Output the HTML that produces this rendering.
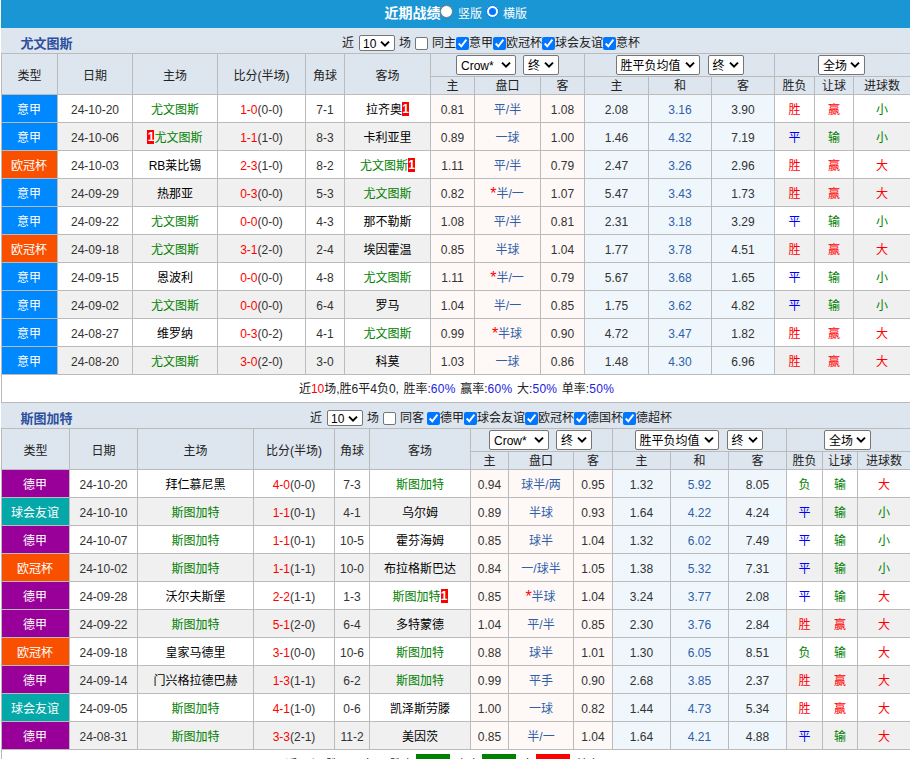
<!DOCTYPE html>
<html lang="zh-CN"><head><meta charset="utf-8"><title>近期战绩</title>
<style>
*{box-sizing:border-box}
html,body{margin:0;padding:0;background:#fff}
body{width:910px;height:759px;overflow:hidden;position:relative;font-family:"Liberation Sans","Noto Sans CJK SC",sans-serif;font-size:12px;color:#333}
#wrap{position:absolute;left:1px;top:0;width:910px}
.top{height:28px;background:#1b96d5;color:#fff;position:relative}
.top b{position:absolute;left:383.5px;top:3px;font-size:14px;line-height:20px}
.top .rd{position:absolute;top:5px;width:13px;height:13px;border-radius:50%;background:#fff;border:1px solid #767676}
.top .rd.on{border:1px solid #0075ff;background:#fff}
.top .rd.on:after{content:"";position:absolute;left:2px;top:2px;width:7px;height:7px;background:#0075ff;border-radius:50%}
.top .lb{position:absolute;top:6px;line-height:16px}
.tbar{background:#dde5ee;position:relative;height:25px}
.nm{position:absolute;left:19.5px;bottom:0.5px;font-weight:bold;color:#2c4f9e;font-size:13px;line-height:18px}
.ctl{position:absolute;left:0;top:6px;height:18px;white-space:nowrap;display:flex;align-items:center}
.ctl .t{line-height:18px;color:#222;display:inline-block;flex:none}
.cb{display:inline-block;width:13px;height:13px;border:1px solid #767676;border-radius:2px;background:#fff;margin:1px 0 0 0;flex:none}
.cb.on{border:none;background:#0075ff}
.cb svg{display:block}
.sel{display:inline-block;position:relative;height:20px;border:1px solid #767676;border-radius:2px;background:#fff;vertical-align:middle;color:#000;text-align:left}
.sel .st{position:absolute;left:4px;top:1px;line-height:18px;white-space:nowrap}
.sel .ar{position:absolute;right:4px;top:5px}
.sel.sm{height:16px}
.sel.sm .st{line-height:14px;left:3px}
.sel.sm .ar{top:4px}
.sel.m2{margin-left:7px}
.sel.m3{margin-left:8px}
.sel.m4{left:-1px}
table{border-collapse:collapse;table-layout:fixed;width:910px}
th,td{border:1px solid #bbb;text-align:center;padding:0;font-weight:normal;overflow:hidden;white-space:nowrap}
th{background:#dde5ee;color:#222}
tr.h1{height:23px}
tr.h2{height:18px}
tr.h2 th{line-height:16px}
td{height:28px;background:#fff}
tr.a td{background:#f0f0f0}
td.k{color:#000}
td.n{padding-top:2px}
td.lg{color:#fff !important;padding-right:1px}
.l-ita{background:#0088ff !important}
.l-ucl{background:#f95000 !important}
.l-ger{background:#990099 !important}
.l-fri{background:#04a8a8 !important}
td.o1{background:#fef9f6 !important}
td.o2{background:#eff7fc !important}
.bl{color:#2f5fa8}
.r{color:#f00}
.as{font-size:16px;line-height:0;vertical-align:-1px;margin-left:-1px}
.g{color:#008000}
.b{color:#00f}
.rc{background:#f00;color:#fff;font-weight:bold;display:inline-block;width:7px;height:14px;line-height:14px;vertical-align:middle;position:relative;top:-1px;text-align:center}
.sum{height:28px;line-height:27px;padding-top:1px;word-spacing:1.2px;text-align:center;border-left:1px solid #bbb;border-bottom:1px solid #bbb;color:#222;background:#fff}
.sum.s2{padding-top:2px}
.sum.s2 i{top:-2px}
.sum .p{color:#2222dd;letter-spacing:.3px}
.sum i{font-style:normal;color:#fff;display:inline-block;width:34px;height:20px;line-height:20px;vertical-align:middle;position:relative;top:-1px;left:-1px}
</style></head><body><div id="wrap">
<div class="top"><b>近期战绩</b><span class="rd" style="left:439px"></span><span class="lb" style="left:457px">竖版</span><span class="rd on" style="left:485px"></span><span class="lb" style="left:502px">横版</span></div>
<div class="tbar"><div class="nm">尤文图斯</div><div class="ctl" style="left:341px"><span class="t" style="width:17px">近</span><span class="sel sm" style="width:36px"><span class="st">10</span><svg class="ar" viewBox="0 0 10 8" width="10" height="8"><path d="M1 1.6 L5 5.6 L9 1.6" fill="none" stroke="#000" stroke-width="2"/></svg></span><span class="t" style="width:12px;margin:0 4px">场</span><span class="cb"></span><span class="t" style="margin-left:4px;margin-right:0px">同主</span><span class="cb on"><svg viewBox="0 0 13 13" width="13" height="13"><path d="M2.7 6.5 L5.3 9.3 L10.4 2.7" fill="none" stroke="#fff" stroke-width="1.9"/></svg></span><span class="t">意甲</span><span class="cb on"><svg viewBox="0 0 13 13" width="13" height="13"><path d="M2.7 6.5 L5.3 9.3 L10.4 2.7" fill="none" stroke="#fff" stroke-width="1.9"/></svg></span><span class="t">欧冠杯</span><span class="cb on"><svg viewBox="0 0 13 13" width="13" height="13"><path d="M2.7 6.5 L5.3 9.3 L10.4 2.7" fill="none" stroke="#fff" stroke-width="1.9"/></svg></span><span class="t">球会友谊</span><span class="cb on"><svg viewBox="0 0 13 13" width="13" height="13"><path d="M2.7 6.5 L5.3 9.3 L10.4 2.7" fill="none" stroke="#fff" stroke-width="1.9"/></svg></span><span class="t">意杯</span></div></div>
<table><colgroup><col style="width:56px"><col style="width:75px"><col style="width:85px"><col style="width:88px"><col style="width:39px"><col style="width:86px"><col style="width:44px"><col style="width:66px"><col style="width:44px"><col style="width:64px"><col style="width:63px"><col style="width:63px"><col style="width:40px"><col style="width:39px"><col style="width:57px"></colgroup><tr class="h1"><th rowspan="2">类型</th><th rowspan="2">日期</th><th rowspan="2">主场</th><th rowspan="2">比分(半场)</th><th rowspan="2">角球</th><th rowspan="2">客场</th><th colspan="3" class="sc" style="padding-right:0px"><span class="sel " style="width:60px"><span class="st">Crow*</span><svg class="ar" viewBox="0 0 10 8" width="10" height="8"><path d="M1 1.6 L5 5.6 L9 1.6" fill="none" stroke="#000" stroke-width="2"/></svg></span><span class="sel m2" style="width:36px"><span class="st">终</span><svg class="ar" viewBox="0 0 10 8" width="10" height="8"><path d="M1 1.6 L5 5.6 L9 1.6" fill="none" stroke="#000" stroke-width="2"/></svg></span></th><th colspan="3" class="sc" style="padding-right:0px"><span class="sel " style="width:84px"><span class="st">胜平负均值</span><svg class="ar" viewBox="0 0 10 8" width="10" height="8"><path d="M1 1.6 L5 5.6 L9 1.6" fill="none" stroke="#000" stroke-width="2"/></svg></span><span class="sel m3" style="width:36px"><span class="st">终</span><svg class="ar" viewBox="0 0 10 8" width="10" height="8"><path d="M1 1.6 L5 5.6 L9 1.6" fill="none" stroke="#000" stroke-width="2"/></svg></span></th><th colspan="3" class="sc"><span class="sel m4" style="width:47px"><span class="st">全场</span><svg class="ar" viewBox="0 0 10 8" width="10" height="8"><path d="M1 1.6 L5 5.6 L9 1.6" fill="none" stroke="#000" stroke-width="2"/></svg></span></th></tr><tr class="h2"><th>主</th><th>盘口</th><th>客</th><th>主</th><th>和</th><th>客</th><th>胜负</th><th>让球</th><th>进球数</th></tr><tr class=""><td class="lg l-ita">意甲</td><td class="n">24-10-20</td><td class="k"><span class="g">尤文图斯</span></td><td class="n"><span class="r">1-0</span>(0-0)</td><td class="n">7-1</td><td class="k">拉齐奥<span class="rc">1</span></td><td class="o1 n">0.81</td><td class="o1 bl">平/半</td><td class="o1 n">1.08</td><td class="o2 n">2.08</td><td class="o2 bl n">3.16</td><td class="o2 n">3.90</td><td class="r">胜</td><td class="r">赢</td><td class="g">小</td></tr>
<tr class="a"><td class="lg l-ita">意甲</td><td class="n">24-10-06</td><td class="k"><span class="rc">1</span><span class="g">尤文图斯</span></td><td class="n"><span class="r">1-1</span>(1-0)</td><td class="n">8-3</td><td class="k">卡利亚里</td><td class="o1 n">0.89</td><td class="o1 bl">一球</td><td class="o1 n">1.00</td><td class="o2 n">1.46</td><td class="o2 bl n">4.32</td><td class="o2 n">7.19</td><td class="b">平</td><td class="g">输</td><td class="g">小</td></tr>
<tr class=""><td class="lg l-ucl">欧冠杯</td><td class="n">24-10-03</td><td class="k">RB莱比锡</td><td class="n"><span class="r">2-3</span>(1-0)</td><td class="n">8-2</td><td class="k"><span class="g">尤文图斯</span><span class="rc">1</span></td><td class="o1 n">1.11</td><td class="o1 bl">平/半</td><td class="o1 n">0.79</td><td class="o2 n">2.47</td><td class="o2 bl n">3.26</td><td class="o2 n">2.96</td><td class="r">胜</td><td class="r">赢</td><td class="r">大</td></tr>
<tr class="a"><td class="lg l-ita">意甲</td><td class="n">24-09-29</td><td class="k">热那亚</td><td class="n"><span class="r">0-3</span>(0-0)</td><td class="n">5-3</td><td class="k"><span class="g">尤文图斯</span></td><td class="o1 n">0.82</td><td class="o1 bl"><span class="r as">*</span>半/一</td><td class="o1 n">1.07</td><td class="o2 n">5.47</td><td class="o2 bl n">3.43</td><td class="o2 n">1.73</td><td class="r">胜</td><td class="r">赢</td><td class="r">大</td></tr>
<tr class=""><td class="lg l-ita">意甲</td><td class="n">24-09-22</td><td class="k"><span class="g">尤文图斯</span></td><td class="n"><span class="r">0-0</span>(0-0)</td><td class="n">4-3</td><td class="k">那不勒斯</td><td class="o1 n">1.08</td><td class="o1 bl">平/半</td><td class="o1 n">0.81</td><td class="o2 n">2.31</td><td class="o2 bl n">3.18</td><td class="o2 n">3.29</td><td class="b">平</td><td class="g">输</td><td class="g">小</td></tr>
<tr class="a"><td class="lg l-ucl">欧冠杯</td><td class="n">24-09-18</td><td class="k"><span class="g">尤文图斯</span></td><td class="n"><span class="r">3-1</span>(2-0)</td><td class="n">2-4</td><td class="k">埃因霍温</td><td class="o1 n">0.85</td><td class="o1 bl">半球</td><td class="o1 n">1.04</td><td class="o2 n">1.77</td><td class="o2 bl n">3.78</td><td class="o2 n">4.51</td><td class="r">胜</td><td class="r">赢</td><td class="r">大</td></tr>
<tr class=""><td class="lg l-ita">意甲</td><td class="n">24-09-15</td><td class="k">恩波利</td><td class="n"><span class="r">0-0</span>(0-0)</td><td class="n">4-8</td><td class="k"><span class="g">尤文图斯</span></td><td class="o1 n">1.11</td><td class="o1 bl"><span class="r as">*</span>半/一</td><td class="o1 n">0.79</td><td class="o2 n">5.67</td><td class="o2 bl n">3.68</td><td class="o2 n">1.65</td><td class="b">平</td><td class="g">输</td><td class="g">小</td></tr>
<tr class="a"><td class="lg l-ita">意甲</td><td class="n">24-09-02</td><td class="k"><span class="g">尤文图斯</span></td><td class="n"><span class="r">0-0</span>(0-0)</td><td class="n">6-4</td><td class="k">罗马</td><td class="o1 n">1.04</td><td class="o1 bl">半/一</td><td class="o1 n">0.85</td><td class="o2 n">1.75</td><td class="o2 bl n">3.62</td><td class="o2 n">4.82</td><td class="b">平</td><td class="g">输</td><td class="g">小</td></tr>
<tr class=""><td class="lg l-ita">意甲</td><td class="n">24-08-27</td><td class="k">维罗纳</td><td class="n"><span class="r">0-3</span>(0-2)</td><td class="n">4-1</td><td class="k"><span class="g">尤文图斯</span></td><td class="o1 n">0.99</td><td class="o1 bl"><span class="r as">*</span>半球</td><td class="o1 n">0.90</td><td class="o2 n">4.72</td><td class="o2 bl n">3.47</td><td class="o2 n">1.82</td><td class="r">胜</td><td class="r">赢</td><td class="r">大</td></tr>
<tr class="a"><td class="lg l-ita">意甲</td><td class="n">24-08-20</td><td class="k"><span class="g">尤文图斯</span></td><td class="n"><span class="r">3-0</span>(2-0)</td><td class="n">3-0</td><td class="k">科莫</td><td class="o1 n">1.03</td><td class="o1 bl">一球</td><td class="o1 n">0.86</td><td class="o2 n">1.48</td><td class="o2 bl n">4.30</td><td class="o2 n">6.96</td><td class="r">胜</td><td class="r">赢</td><td class="r">大</td></tr></table>
<div class="sum">近<span class="r">10</span>场,胜6平4负0, 胜率:<span class="p">60%</span> 赢率:<span class="p">60%</span> 大:<span class="p">50%</span> 单率:<span class="p">50%</span></div>
<div class="tbar"><div class="nm">斯图加特</div><div class="ctl" style="left:309px"><span class="t" style="width:17px">近</span><span class="sel sm" style="width:36px"><span class="st">10</span><svg class="ar" viewBox="0 0 10 8" width="10" height="8"><path d="M1 1.6 L5 5.6 L9 1.6" fill="none" stroke="#000" stroke-width="2"/></svg></span><span class="t" style="width:12px;margin:0 4px">场</span><span class="cb"></span><span class="t" style="margin-left:4px;margin-right:3px">同客</span><span class="cb on"><svg viewBox="0 0 13 13" width="13" height="13"><path d="M2.7 6.5 L5.3 9.3 L10.4 2.7" fill="none" stroke="#fff" stroke-width="1.9"/></svg></span><span class="t">德甲</span><span class="cb on"><svg viewBox="0 0 13 13" width="13" height="13"><path d="M2.7 6.5 L5.3 9.3 L10.4 2.7" fill="none" stroke="#fff" stroke-width="1.9"/></svg></span><span class="t">球会友谊</span><span class="cb on"><svg viewBox="0 0 13 13" width="13" height="13"><path d="M2.7 6.5 L5.3 9.3 L10.4 2.7" fill="none" stroke="#fff" stroke-width="1.9"/></svg></span><span class="t">欧冠杯</span><span class="cb on"><svg viewBox="0 0 13 13" width="13" height="13"><path d="M2.7 6.5 L5.3 9.3 L10.4 2.7" fill="none" stroke="#fff" stroke-width="1.9"/></svg></span><span class="t">德国杯</span><span class="cb on"><svg viewBox="0 0 13 13" width="13" height="13"><path d="M2.7 6.5 L5.3 9.3 L10.4 2.7" fill="none" stroke="#fff" stroke-width="1.9"/></svg></span><span class="t">德超杯</span></div></div>
<table><colgroup><col style="width:68px"><col style="width:68px"><col style="width:116px"><col style="width:81px"><col style="width:35px"><col style="width:101px"><col style="width:38px"><col style="width:65px"><col style="width:39px"><col style="width:58px"><col style="width:58px"><col style="width:58px"><col style="width:36px"><col style="width:35px"><col style="width:53px"></colgroup><tr class="h1"><th rowspan="2">类型</th><th rowspan="2">日期</th><th rowspan="2">主场</th><th rowspan="2">比分(半场)</th><th rowspan="2">角球</th><th rowspan="2">客场</th><th colspan="3" class="sc" style="padding-right:2px"><span class="sel " style="width:60px"><span class="st">Crow*</span><svg class="ar" viewBox="0 0 10 8" width="10" height="8"><path d="M1 1.6 L5 5.6 L9 1.6" fill="none" stroke="#000" stroke-width="2"/></svg></span><span class="sel m2" style="width:36px"><span class="st">终</span><svg class="ar" viewBox="0 0 10 8" width="10" height="8"><path d="M1 1.6 L5 5.6 L9 1.6" fill="none" stroke="#000" stroke-width="2"/></svg></span></th><th colspan="3" class="sc" style="padding-right:2px"><span class="sel " style="width:84px"><span class="st">胜平负均值</span><svg class="ar" viewBox="0 0 10 8" width="10" height="8"><path d="M1 1.6 L5 5.6 L9 1.6" fill="none" stroke="#000" stroke-width="2"/></svg></span><span class="sel m3" style="width:36px"><span class="st">终</span><svg class="ar" viewBox="0 0 10 8" width="10" height="8"><path d="M1 1.6 L5 5.6 L9 1.6" fill="none" stroke="#000" stroke-width="2"/></svg></span></th><th colspan="3" class="sc"><span class="sel m4" style="width:47px"><span class="st">全场</span><svg class="ar" viewBox="0 0 10 8" width="10" height="8"><path d="M1 1.6 L5 5.6 L9 1.6" fill="none" stroke="#000" stroke-width="2"/></svg></span></th></tr><tr class="h2"><th>主</th><th>盘口</th><th>客</th><th>主</th><th>和</th><th>客</th><th>胜负</th><th>让球</th><th>进球数</th></tr><tr class=""><td class="lg l-ger">德甲</td><td class="n">24-10-20</td><td class="k">拜仁慕尼黑</td><td class="n"><span class="r">4-0</span>(0-0)</td><td class="n">7-3</td><td class="k"><span class="g">斯图加特</span></td><td class="o1 n">0.94</td><td class="o1 bl">球半/两</td><td class="o1 n">0.95</td><td class="o2 n">1.32</td><td class="o2 bl n">5.92</td><td class="o2 n">8.05</td><td class="g">负</td><td class="g">输</td><td class="r">大</td></tr>
<tr class="a"><td class="lg l-fri">球会友谊</td><td class="n">24-10-10</td><td class="k"><span class="g">斯图加特</span></td><td class="n"><span class="r">1-1</span>(0-1)</td><td class="n">4-1</td><td class="k">乌尔姆</td><td class="o1 n">0.89</td><td class="o1 bl">半球</td><td class="o1 n">0.93</td><td class="o2 n">1.64</td><td class="o2 bl n">4.22</td><td class="o2 n">4.24</td><td class="b">平</td><td class="g">输</td><td class="g">小</td></tr>
<tr class=""><td class="lg l-ger">德甲</td><td class="n">24-10-07</td><td class="k"><span class="g">斯图加特</span></td><td class="n"><span class="r">1-1</span>(0-1)</td><td class="n">10-5</td><td class="k">霍芬海姆</td><td class="o1 n">0.85</td><td class="o1 bl">球半</td><td class="o1 n">1.04</td><td class="o2 n">1.32</td><td class="o2 bl n">6.02</td><td class="o2 n">7.49</td><td class="b">平</td><td class="g">输</td><td class="g">小</td></tr>
<tr class="a"><td class="lg l-ucl">欧冠杯</td><td class="n">24-10-02</td><td class="k"><span class="g">斯图加特</span></td><td class="n"><span class="r">1-1</span>(1-1)</td><td class="n">10-0</td><td class="k">布拉格斯巴达</td><td class="o1 n">0.84</td><td class="o1 bl">一/球半</td><td class="o1 n">1.05</td><td class="o2 n">1.38</td><td class="o2 bl n">5.32</td><td class="o2 n">7.31</td><td class="b">平</td><td class="g">输</td><td class="g">小</td></tr>
<tr class=""><td class="lg l-ger">德甲</td><td class="n">24-09-28</td><td class="k">沃尔夫斯堡</td><td class="n"><span class="r">2-2</span>(1-1)</td><td class="n">1-3</td><td class="k"><span class="g">斯图加特</span><span class="rc">1</span></td><td class="o1 n">0.85</td><td class="o1 bl"><span class="r as">*</span>半球</td><td class="o1 n">1.04</td><td class="o2 n">3.24</td><td class="o2 bl n">3.77</td><td class="o2 n">2.08</td><td class="b">平</td><td class="g">输</td><td class="r">大</td></tr>
<tr class="a"><td class="lg l-ger">德甲</td><td class="n">24-09-22</td><td class="k"><span class="g">斯图加特</span></td><td class="n"><span class="r">5-1</span>(2-0)</td><td class="n">6-4</td><td class="k">多特蒙德</td><td class="o1 n">1.04</td><td class="o1 bl">平/半</td><td class="o1 n">0.85</td><td class="o2 n">2.30</td><td class="o2 bl n">3.76</td><td class="o2 n">2.84</td><td class="r">胜</td><td class="r">赢</td><td class="r">大</td></tr>
<tr class=""><td class="lg l-ucl">欧冠杯</td><td class="n">24-09-18</td><td class="k">皇家马德里</td><td class="n"><span class="r">3-1</span>(0-0)</td><td class="n">10-6</td><td class="k"><span class="g">斯图加特</span></td><td class="o1 n">0.88</td><td class="o1 bl">球半</td><td class="o1 n">1.01</td><td class="o2 n">1.30</td><td class="o2 bl n">6.05</td><td class="o2 n">8.51</td><td class="g">负</td><td class="g">输</td><td class="r">大</td></tr>
<tr class="a"><td class="lg l-ger">德甲</td><td class="n">24-09-14</td><td class="k">门兴格拉德巴赫</td><td class="n"><span class="r">1-3</span>(1-1)</td><td class="n">6-2</td><td class="k"><span class="g">斯图加特</span></td><td class="o1 n">0.99</td><td class="o1 bl">平手</td><td class="o1 n">0.90</td><td class="o2 n">2.68</td><td class="o2 bl n">3.85</td><td class="o2 n">2.37</td><td class="r">胜</td><td class="r">赢</td><td class="r">大</td></tr>
<tr class=""><td class="lg l-fri">球会友谊</td><td class="n">24-09-05</td><td class="k"><span class="g">斯图加特</span></td><td class="n"><span class="r">4-1</span>(1-0)</td><td class="n">0-6</td><td class="k">凯泽斯劳滕</td><td class="o1 n">1.00</td><td class="o1 bl">一球</td><td class="o1 n">0.82</td><td class="o2 n">1.44</td><td class="o2 bl n">4.73</td><td class="o2 n">5.34</td><td class="r">胜</td><td class="r">赢</td><td class="r">大</td></tr>
<tr class="a"><td class="lg l-ger">德甲</td><td class="n">24-08-31</td><td class="k"><span class="g">斯图加特</span></td><td class="n"><span class="r">3-3</span>(2-1)</td><td class="n">11-2</td><td class="k">美因茨</td><td class="o1 n">0.85</td><td class="o1 bl">半/一</td><td class="o1 n">1.04</td><td class="o2 n">1.64</td><td class="o2 bl n">4.21</td><td class="o2 n">4.88</td><td class="b">平</td><td class="g">输</td><td class="r">大</td></tr></table>
<div class="sum s2">近<span class="r">10</span>场,胜3平5负2, 胜率:<i style="background:#008000">30%</i> 赢率:<i style="background:#008000">30%</i> 大:<i style="background:#f00">70%</i> 单率:<span class="p">10%</span></div>
</div></body></html>
